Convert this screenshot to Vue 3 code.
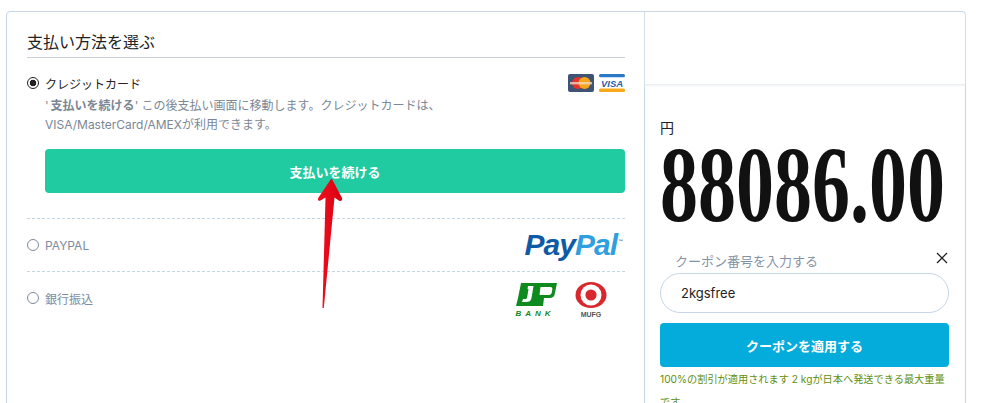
<script setup>
const radioMethods = [
  { label: 'PAYPAL', logo: 'paypal' },
  { label: '銀行振込', logo: 'bank' },
]
</script>

<template>
  <div class="page">
    <div class="card">
      <section class="left">
        <h2 class="title">支払い方法を選ぶ</h2>

        <div class="method first">
          <div class="row">
            <span class="radio on"></span>
            <span class="name active">クレジットカード</span>
            <div class="cards">
              <svg width="26" height="18" viewBox="0 0 26 18">
                <rect width="26" height="18" rx="2" fill="#3f5475" />
                <circle cx="10" cy="9" r="6" fill="#e2342d" />
                <circle cx="16.5" cy="9" r="6" fill="#f6a61e" />
                <rect x="2" y="8" width="22" height="2.4" fill="#f3dcc0" opacity=".75" />
              </svg>
              <svg width="26" height="18" viewBox="0 0 26 18">
                <rect width="26" height="18" fill="#fff" />
                <rect width="26" height="3.2" rx="1.5" fill="#2a78c8" />
                <rect y="14.6" width="26" height="3.4" rx="1.5" fill="#f7a81b" />
                <text x="13" y="12.8" text-anchor="middle" class="visa">VISA</text>
              </svg>
            </div>
          </div>
          <p class="desc">
            '<b class="lead">支払いを続ける</b>' この後支払い画面に移動します。クレジットカードは、<br />VISA/MasterCard/AMEXが利用できます。
          </p>
          <button class="pay">支払いを続ける</button>
        </div>

        <div v-for="m in radioMethods" :key="m.label" class="method other">
          <div class="row">
            <span class="radio"></span>
            <span class="name">{{ m.label }}</span>
            <div v-if="m.logo === 'paypal'" class="paypal"><i>Pay</i><i class="pal">Pal</i><sup>™</sup></div>
            <div v-else class="banks">
              <svg width="42" height="36" viewBox="0 0 42 36">
                <path d="M6 1H42L39.500 13C39 15 37 16 35 16H29L28 24H1L3 16Z" fill="#0f8a1e" />
                <path d="M13 4H18.500L16.500 16C16 19 14 20 11 20H7L8 17H10C11.500 17 12 16.500 12.200 15L13.500 7H12.500Z" fill="#fff" />
                <path d="M25.500 5H35.500C37 5 37.500 6 37.300 7.500L36.800 10.500C36.500 12 35.500 13 34 13H24.500Z" fill="#fff" />
                <text x="0.500" y="34" class="bank-word">BANK</text>
              </svg>
              <svg width="32" height="36" viewBox="0 0 32 36">
                <ellipse cx="16" cy="13" rx="15.500" ry="13" fill="#d9272e" />
                <ellipse cx="16" cy="13" rx="10.500" ry="10.500" fill="#fff" />
                <circle cx="16" cy="13" r="5.600" fill="#d9272e" />
                <text x="16" y="35" text-anchor="middle" class="mufg-word">MUFG</text>
              </svg>
            </div>
          </div>
        </div>
      </section>

      <aside class="right">
        <div class="head"></div>
        <div class="body">
          <div class="currency">円</div>
          <div class="amount"><span>88086.00</span></div>
          <div class="coupon-label">
            <span>クーポン番号を入力する</span>
            <svg class="close" width="12" height="12" viewBox="0 0 12 12"><path d="M1 1L11 11M11 1L1 11" stroke="#222" stroke-width="1.300" /></svg>
          </div>
          <div class="input">2kgsfree</div>
          <button class="apply">クーポンを適用する</button>
          <p class="note">100%の割引が適用されます 2 kgが日本へ発送できる最大重量です。</p>
        </div>
      </aside>
    </div>

    <svg class="arrow" width="40" height="140" viewBox="0 0 40 140">
      <defs>
        <linearGradient id="ag" x1="0" x2="1" y1="0" y2="0">
          <stop offset="0" stop-color="#f01020" />
          <stop offset="1" stop-color="#d80010" />
        </linearGradient>
      </defs>
      <path
        d="M22 1L32 20C33 23 30 24 28 22L24.500 19.500L13.800 130L12.500 130L15.500 19.500L11.500 22C9 24 7 22 8.500 19.500L21 1Z"
        fill="url(#ag)"
      />
    </svg>
  </div>
</template>

<style scoped>
.page {
  position: relative;
  width: 994px;
  height: 403px;
  overflow: hidden;
  background: #fff;
  padding: 11px 28px 0 6px;
  box-sizing: border-box;
  font-family: "Inter", "Noto Sans CJK JP", sans-serif;
}
.card {
  display: grid;
  grid-template-columns: 638px minmax(0, 1fr);
  height: 420px;
  border: 1px solid #c6d6e6;
  border-radius: 4px;
  box-sizing: border-box;
}
.left {
  padding: 17px 19px 0 20px;
  border-right: 1px solid #c6d6e6;
}
.title {
  margin: 0;
  padding-bottom: 4px;
  height: 24px;
  font-size: 16px;
  line-height: 26px;
  font-weight: 400;
  color: #222;
  border-bottom: 1px solid #c6d0dc;
}
.method.first {
  padding-top: 16px;
  height: 160px;
  box-sizing: border-box;
}
.row {
  display: flex;
  align-items: center;
  height: 18px;
}
.radio {
  width: 10px;
  height: 10px;
  border: 1px solid #7d8a99;
  border-radius: 50%;
  margin-right: 6px;
  flex: none;
  background: #fff;
}
.radio.on {
  border-color: #222;
  background: radial-gradient(circle, #222 0 3px, #fff 3.600px);
}
.name {
  font-size: 12px;
  color: #7d8ba0;
}
.name.active {
  color: #222;
}
.cards {
  margin-left: auto;
  display: flex;
  gap: 5px;
}
.visa {
  font: italic 800 9.500px "Liberation Sans", sans-serif;
  fill: #2a5fa8;
}
.desc {
  margin: 4px 0 0 18px;
  font-size: 12px;
  line-height: 19px;
  color: #7b8794;
}
.lead {
  margin-left: 2px;
}
.pay {
  display: block;
  width: 580px;
  height: 44px;
  margin: 15px 0 0 18px;
  border: 0;
  border-radius: 4px;
  background: #20cba1;
  color: #fff;
  font: 700 13px "Inter", "Noto Sans CJK JP", sans-serif;
}
.method.other {
  height: 53px;
  border-top: 1px dashed #c3d6e3;
  padding-top: 17px;
  box-sizing: border-box;
}
.paypal {
  margin-left: auto;
  margin-right: 3px;
  font: italic 700 30px "Liberation Sans", sans-serif;
  letter-spacing: -1px;
  color: #0f5aa6;
  display: flex;
  line-height: 18px;
}
.paypal i { font-weight: 800; }
.paypal .pal { color: #2f9fdf; }
.paypal sup {
  font-size: 5px;
  font-style: normal;
  line-height: 10px;
  color: #2f7fb8;
  margin-left: 1px;
}
.banks {
  margin-left: auto;
  margin-right: 18px;
  display: flex;
  gap: 18px;
  padding-top: 3px;
}
.bank-word {
  font: italic 700 8px "Liberation Sans", sans-serif;
  letter-spacing: 4px;
  fill: #128a22;
}
.mufg-word {
  font: 700 7px "Liberation Sans", sans-serif;
  fill: #555;
}
.head {
  height: 72px;
  border-bottom: 1px solid #eaeef1;
  box-shadow: 0 1px 2px #f0f2f4;
}
.body {
  padding: 34px 16px 0 15px;
}
.currency {
  font-size: 14px;
  line-height: 18px;
  color: #222;
}
.amount {
  height: 92px;
  font: 700 107px/97px "Liberation Serif", serif;
  color: #111;
  white-space: nowrap;
}
.amount span {
  display: block;
  width: 284px;
  transform: scaleX(0.71);
  transform-origin: 0 50%;
}
.coupon-label {
  display: flex;
  align-items: center;
  justify-content: space-between;
  padding: 0 1px 0 15px;
  margin-top: 19px;
  height: 25px;
  font-size: 13px;
  color: #8392a5;
}
.close {
  margin: -6px 0 0 0;
}
.input {
  height: 40px;
  box-sizing: border-box;
  border: 1px solid #c6d6e6;
  border-radius: 20px;
  padding-left: 20px;
  font-size: 13px;
  line-height: 38px;
  color: #222;
}
.apply {
  display: block;
  width: 100%;
  height: 44px;
  margin-top: 10px;
  border: 0;
  border-radius: 4px;
  background: #04acdc;
  color: #fff;
  font: 700 13px "Inter", "Noto Sans CJK JP", sans-serif;
}
.note {
  margin: 1px 0 0;
  font-size: 10.200px;
  line-height: 23px;
  color: #5f8f10;
}
.arrow {
  position: absolute;
  left: 310px;
  top: 178px;
}
</style>
